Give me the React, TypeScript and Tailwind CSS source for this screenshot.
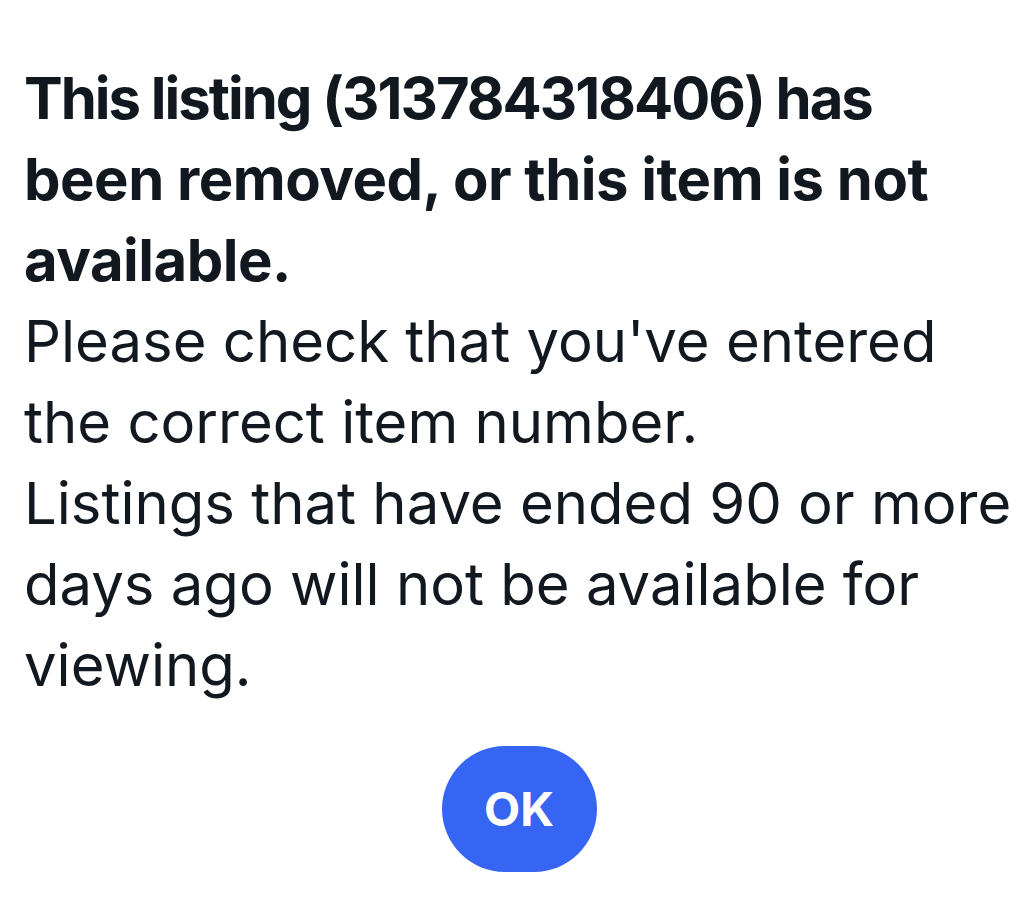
export default function App() {
  return (
    <div className="min-h-[916px] w-full bg-white text-[#111820]" style={{ fontFamily: "Inter, 'Noto Sans', sans-serif" }}>
      <div className="pl-6 pr-2 pt-[58px]">
        <p className="text-[58px] leading-[81px] font-bold tracking-[-2px]">
          This listing (313784318406) has{" "}
          <span className="tracking-[-0.5px]">been removed, or this item is not available.</span>
        </p>
        <p className="text-[58px] leading-[81px] font-normal tracking-[0px]">
          Please check that you've entered the correct item number.
        </p>
        <p className="text-[58px] leading-[81px] font-normal tracking-[0px]">
          Listings that have ended 90 or more days ago will not be available for viewing.
        </p>
        <div className="mt-10 flex justify-center">
          <button className="flex h-[126px] w-[155px] items-center justify-center rounded-full bg-[#3665f3] text-[47px] font-bold text-white">
            OK
          </button>
        </div>
      </div>
    </div>
  );
}
